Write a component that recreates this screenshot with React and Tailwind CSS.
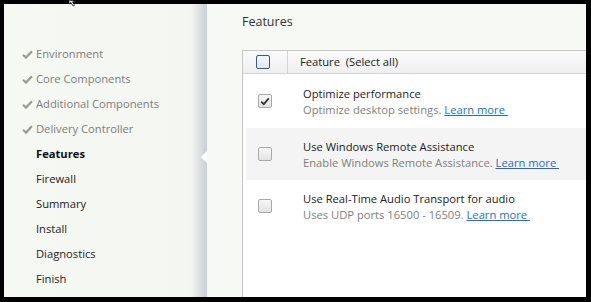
import React from 'react';

const STEPS = [
    { label: 'Environment', done: true },
    { label: 'Core Components', done: true },
    { label: 'Additional Components', done: true },
    { label: 'Delivery Controller', done: true },
    { label: 'Features', current: true },
    { label: 'Firewall' },
    { label: 'Summary' },
    { label: 'Install' },
    { label: 'Diagnostics' },
    { label: 'Finish' },
];

const FEATURES = [
    { title: 'Optimize performance', desc: 'Optimize desktop settings.', checked: true },
    { title: 'Use Windows Remote Assistance', desc: 'Enable Windows Remote Assistance.', checked: false, shaded: true },
    { title: 'Use Real-Time Audio Transport for audio', desc: 'Uses UDP ports 16500 - 16509.', checked: false },
];

const Check = () => (
    <svg width="11" height="9" viewBox="0 0 11 9" className="mr-[3px] shrink-0">
        <path d="M1 4.8 L4 7.6 L10 1.2" fill="none" stroke="#9a9a9a" strokeWidth="2.2" />
    </svg>
);

const Box = ({ checked, blue }) => (
    <div
        className={
            'w-[14px] h-[14px] rounded-[2px] border flex items-center justify-center ' +
            (blue
                ? 'border-[#2b5e9e] bg-gradient-to-b from-[#f4f7fb] to-[#e2e9f2]'
                : 'border-[#a9a9a9] bg-gradient-to-b from-[#f7f7f7] to-[#e3e3e3]')
        }
    >
        {checked && (
            <svg width="10" height="9" viewBox="0 0 10 9">
                <path d="M1.2 4.6 L3.8 7.2 L8.8 1.4" fill="none" stroke="#333" strokeWidth="1.8" />
            </svg>
        )}
    </div>
);

const App = () => {
    return (
        <div
            className="relative w-[591px] h-[302px] bg-black pt-[4px] pl-[4px] pr-[5px] pb-[5px] overflow-hidden"
            style={{ fontFamily: '"Open Sans", "Noto Sans", sans-serif' }}
        >
            {/* mouse pointer peeking from the top */}
            <svg className="absolute left-[68px] top-0 z-10" width="10" height="7" viewBox="0 0 10 7">
                <path d="M1 0 L1 4 L3 2.5 L5 6 L6.5 5.3 L4.6 2 L7.5 1.6 Z" fill="#fff" stroke="#222" strokeWidth="0.8" />
            </svg>

            <div className="flex h-full w-full">
                {/* Step list */}
                <div className="relative w-[203px] h-full bg-gradient-to-r from-[#f6f8f2] via-[#f4f6f2] via-[92%] to-[#c9ced6] pt-[38px] pl-[18px]">
                    {STEPS.map((s) => (
                        <div key={s.label} className="h-[25px] flex items-center text-[11.2px]">
                            {s.done ? <Check /> : <span className="w-[14px] shrink-0" />}
                            <span
                                className={
                                    s.done
                                        ? 'text-[#7d7d7d]'
                                        : s.current
                                        ? 'text-[#111] font-bold'
                                        : 'text-[#222]'
                                }
                            >
                                {s.label}
                            </span>
                        </div>
                    ))}
                    <div className="absolute right-0 top-[147px] w-0 h-0 border-y-[6px] border-y-transparent border-r-[6px] border-r-white" />
                </div>

                {/* Content */}
                <div className="flex-1 h-full bg-[#f7f9f4] flex flex-col overflow-hidden">
                    <div className="h-[46px] pl-[35px] pt-[9px] text-[12.5px] text-[#333]">Features</div>
                    <div className="flex-1 ml-[35px] border-l border-t border-[#c6c6c6] bg-white w-[400px]">
                        <div className="h-[23px] flex border-b border-[#d4d4d4] bg-gradient-to-b from-[#fbfbfb] to-[#efefef]">
                            <div className="w-[45px] flex items-center justify-center pr-[4px] border-r border-[#d4d4d4]">
                                <Box blue />
                            </div>
                            <div className="pl-[12px] flex items-center text-[11.2px] text-[#222]">
                                Feature&nbsp;&nbsp;(Select all)
                            </div>
                        </div>
                        {FEATURES.map((f, i) => (
                            <div
                                key={f.title}
                                className={
                                    'flex ml-[3px] ' +
                                    (i === 0 ? 'h-[54px] ' : 'h-[52px] ') +
                                    (f.shaded ? 'bg-[#f4f4f4]' : 'bg-white')
                                }
                            >
                                <div className="w-[42px] flex items-center justify-center pr-[4px]">
                                    <Box checked={f.checked} />
                                </div>
                                <div className="pl-[15px] pt-[1px] flex flex-col justify-center text-[11.2px] leading-[16px]">
                                    <div className="text-[#222]">{f.title}</div>
                                    <div className="text-[#808080]">
                                        {f.desc}{' '}
                                        <span className="text-[#1e6fd0] underline">Learn more&nbsp;</span>
                                    </div>
                                </div>
                            </div>
                        ))}
                    </div>
                </div>
            </div>
        </div>
    );
};

export default App;
